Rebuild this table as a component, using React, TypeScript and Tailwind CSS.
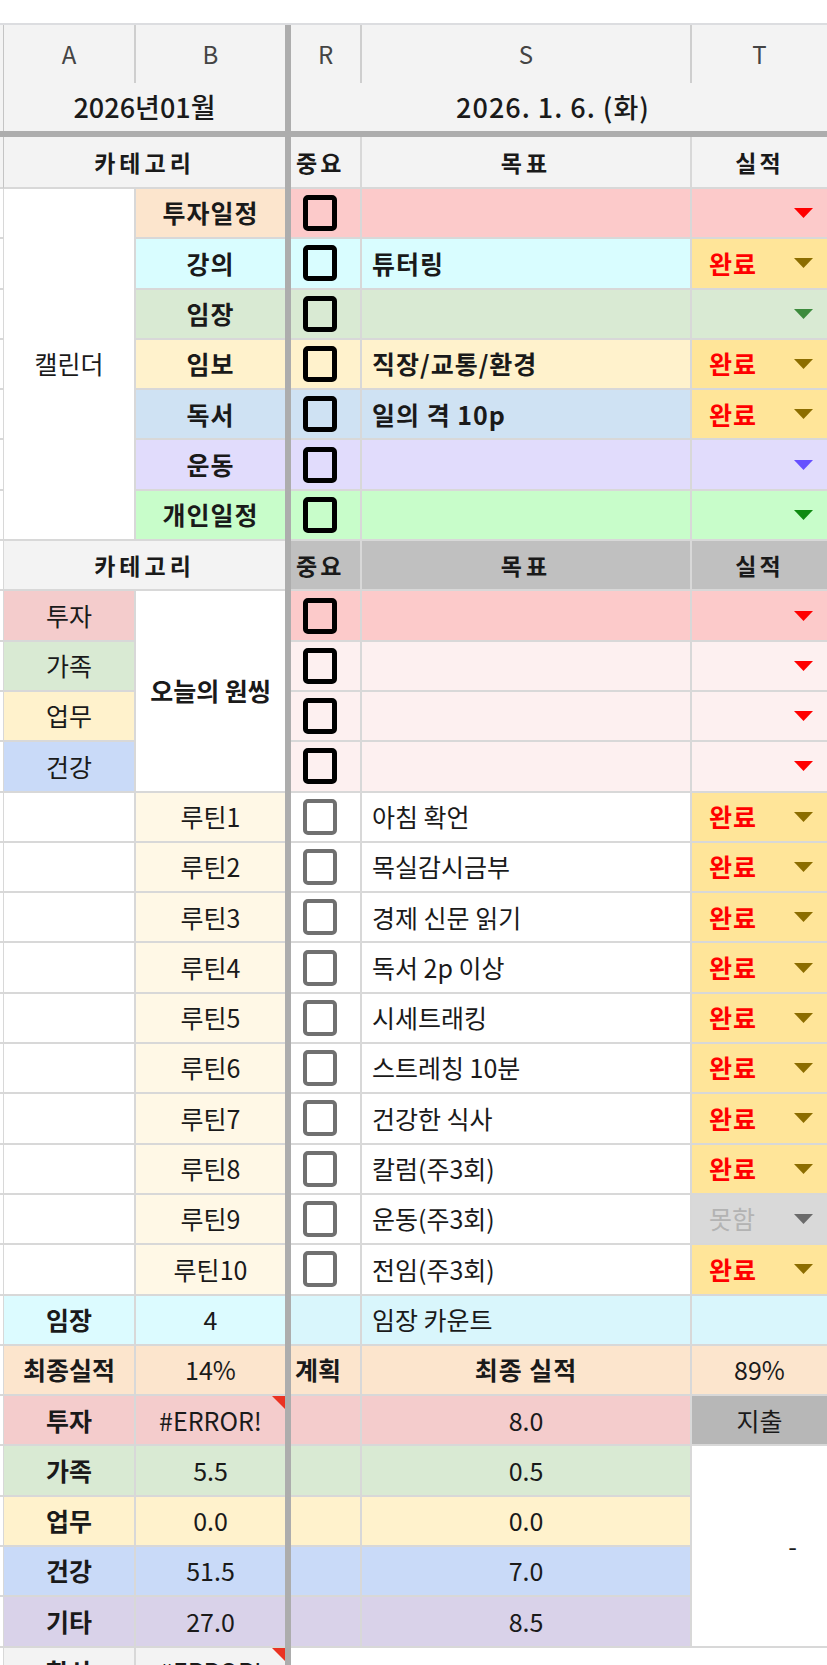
import React from 'react';

const line = 'border-b-2 border-[#d8d8d8]';

function Box({ dark }: { dark?: boolean }) {
  return dark ? (
    <div className="w-[34px] h-[36px] rounded-[5px] border-[5px] border-black" />
  ) : (
    <div className="w-[34px] h-[36px] rounded-[5px] border-[4px] border-[#707070] bg-white" />
  );
}

function Arrow({ color }: { color: string }) {
  return (
    <svg width="19" height="10" viewBox="0 0 19 10">
      <polygon points="0,0 19,0 9.5,10" fill={color} />
    </svg>
  );
}

function ErrorMark() {
  return <div className="absolute top-0 right-0 w-0 h-0 border-l-[13px] border-l-transparent border-t-[13px] border-t-[#ea3323]" />;
}

// T column: status chip with dropdown arrow
function Status({ done, miss, bg, arrow }: { done?: boolean; miss?: boolean; bg?: string; arrow: string }) {
  let cls = `flex items-center justify-between pl-[17px] pr-[14px] ${line}`;
  if (done) cls += ' bg-[#ffe599]';
  else if (miss) cls += ' bg-[#d9d9d9]';
  return (
    <div className={cls} style={bg ? { backgroundColor: bg } : undefined}>
      {done && <span className="text-[25px] font-bold text-[#ff0000] tracking-[1px]">완료</span>}
      {miss && <span className="text-[25px] text-[#b3b3b3]">못함</span>}
      {!done && !miss && <span />}
      <Arrow color={arrow} />
    </div>
  );
}

const calendar = [
  { label: '투자일정', labelBg: 'bg-[#fce5cd]', rowBg: 'bg-[#fccaca]', hex: '#fccaca', goal: '', done: false, arrow: '#ff0000' },
  { label: '강의', labelBg: 'bg-[#d9fdff]', rowBg: 'bg-[#d9fdff]', hex: '#d9fdff', goal: '튜터링', done: true, arrow: '#8c6d00' },
  { label: '임장', labelBg: 'bg-[#d9ead3]', rowBg: 'bg-[#d9ead3]', hex: '#d9ead3', goal: '', done: false, arrow: '#3d8b3d' },
  { label: '임보', labelBg: 'bg-[#fff2cc]', rowBg: 'bg-[#fff2cc]', hex: '#fff2cc', goal: '직장/교통/환경', done: true, arrow: '#8c6d00' },
  { label: '독서', labelBg: 'bg-[#cfe2f3]', rowBg: 'bg-[#cfe2f3]', hex: '#cfe2f3', goal: '일의 격 10p', done: true, arrow: '#8c6d00' },
  { label: '운동', labelBg: 'bg-[#e1dcfc]', rowBg: 'bg-[#e1dcfc]', hex: '#e1dcfc', goal: '', done: false, arrow: '#6650ff' },
  { label: '개인일정', labelBg: 'bg-[#c8fdca]', rowBg: 'bg-[#c8fdca]', hex: '#c8fdca', goal: '', done: false, arrow: '#0f8a12' },
];

const oneThing = [
  { label: '투자', bg: 'bg-[#f4cccc]', rowBg: 'bg-[#fccaca]' },
  { label: '가족', bg: 'bg-[#d9ead3]', rowBg: 'bg-[#fdf0f0]' },
  { label: '업무', bg: 'bg-[#fff2cc]', rowBg: 'bg-[#fdf0f0]' },
  { label: '건강', bg: 'bg-[#c9daf8]', rowBg: 'bg-[#fdf0f0]' },
];

const routines = [
  { goal: '아침 확언', done: true },
  { goal: '목실감시금부', done: true },
  { goal: '경제 신문 읽기', done: true },
  { goal: '독서 2p 이상', done: true },
  { goal: '시세트래킹', done: true },
  { goal: '스트레칭 10분', done: true },
  { goal: '건강한 식사', done: true },
  { goal: '칼럼(주3회)', done: true },
  { goal: '운동(주3회)', done: false },
  { goal: '전임(주3회)', done: true },
];

const totals = [
  { label: '가족', bg: 'bg-[#d9ead3]', a: '5.5', b: '0.5' },
  { label: '업무', bg: 'bg-[#fff2cc]', a: '0.0', b: '0.0' },
  { label: '건강', bg: 'bg-[#c9daf8]', a: '51.5', b: '7.0' },
  { label: '기타', bg: 'bg-[#d9d2e9]', a: '27.0', b: '8.5' },
];

function Strip({ head }: { head?: boolean }) {
  return <div className={`border-r border-[#c4c4c4] ${head ? 'bg-[#f3f3f3]' : `bg-white ${line}`}`} />;
}

export default function App() {
  return (
    <div className="h-[1665px] overflow-hidden bg-white pt-[23px] font-['Noto_Sans_CJK_KR',sans-serif] text-[#1a1a1a]">
      <div className="grid grid-cols-[4px_132px_149px_6px_71px_330px_135px] grid-rows-[58px_48px_6px_52px_repeat(30,50.3px)] border-t-2 border-[#dcdde0]">
        {/* frozen dividers */}
        <div className="col-start-4 row-[1/-1] bg-[#adadad]" />
        <div className="col-[1/-1] row-start-3 bg-[#adadad]" />

        {/* column letters */}
        <Strip head />
        <div className="flex items-center justify-center bg-[#f3f3f3] border-r-2 border-[#cecece] text-[24px] text-[#444]">A</div>
        <div className="flex items-center justify-center bg-[#f3f3f3] text-[24px] text-[#444]">B</div>
        <div className="flex items-center justify-center bg-[#f3f3f3] border-r-2 border-[#cecece] text-[24px] text-[#444]">R</div>
        <div className="flex items-center justify-center bg-[#f3f3f3] border-r-2 border-[#cecece] text-[24px] text-[#444]">S</div>
        <div className="flex items-center justify-center bg-[#f3f3f3] text-[24px] text-[#444]">T</div>

        {/* month / date */}
        <Strip head />
        <div className="col-span-2 flex items-center justify-center bg-[#f3f3f3] text-[27px] font-medium">2026년01월</div>
        <div className="col-span-3 flex items-center justify-center pr-[12px] bg-[#f3f3f3] text-[27px] font-medium tracking-[1px]">2026. 1. 6. (화)</div>

        {/* header */}
        <div className="row-start-4 col-start-1 border-r border-[#c4c4c4] bg-[#f3f3f3] border-b-2 border-b-[#d8d8d8]" />
        <div className={`col-span-2 flex items-center justify-center bg-[#f3f3f3] ${line} text-[23px] font-bold tracking-[4px]`}>카테고리</div>
        <div className={`flex items-center pl-[5px] bg-[#f3f3f3] border-r-2 ${line} text-[23px] font-bold tracking-[3px]`}>중요</div>
        <div className={`flex items-center justify-center bg-[#f3f3f3] border-r-2 ${line} text-[23px] font-bold tracking-[4px]`}>목표</div>
        <div className={`flex items-center justify-center bg-[#f3f3f3] ${line} text-[23px] font-bold tracking-[3px]`}>실적</div>

        {/* calendar block */}
        {calendar.map((r, i) => (
          <React.Fragment key={r.label}>
            <Strip />
            {i === 0 && (
              <div className={`row-span-7 flex items-center justify-center bg-white border-r-2 ${line} text-[25px]`}>캘린더</div>
            )}
            <div className={`flex items-center justify-center ${r.labelBg} ${line} text-[25px] font-bold tracking-[1px]`}>{r.label}</div>
            <div className={`flex items-center pl-[12px] ${r.rowBg} border-r-2 ${line}`}>
              <Box dark />
            </div>
            <div className={`flex items-center pl-[10px] ${r.rowBg} border-r-2 ${line} text-[25px] font-bold tracking-[1px]`}>{r.goal}</div>
            <Status done={r.done} bg={r.done ? undefined : r.hex} arrow={r.arrow} />
          </React.Fragment>
        ))}

        {/* second header */}
        <Strip />
        <div className={`col-span-2 flex items-center justify-center bg-[#f3f3f3] ${line} text-[23px] font-bold tracking-[4px]`}>카테고리</div>
        <div className={`flex items-center pl-[5px] bg-[#c0c0c0] border-r-2 ${line} text-[23px] font-bold tracking-[3px]`}>중요</div>
        <div className={`flex items-center justify-center bg-[#c0c0c0] border-r-2 ${line} text-[23px] font-bold tracking-[4px]`}>목표</div>
        <div className={`flex items-center justify-center bg-[#c0c0c0] ${line} text-[23px] font-bold tracking-[3px]`}>실적</div>

        {/* one thing */}
        {oneThing.map((r, i) => (
          <React.Fragment key={r.label}>
            <Strip />
            <div className={`flex items-center justify-center ${r.bg} border-r-2 ${line} text-[25px]`}>{r.label}</div>
            {i === 0 && (
              <div className={`row-span-4 flex items-center justify-center bg-white ${line} text-[25px] font-bold`}>오늘의 원씽</div>
            )}
            <div className={`flex items-center pl-[12px] ${r.rowBg} border-r-2 ${line}`}>
              <Box dark />
            </div>
            <div className={`${r.rowBg} border-r-2 ${line}`} />
            <div className={`flex items-center justify-end pr-[14px] ${r.rowBg} ${line}`}>
              <Arrow color="#ff0000" />
            </div>
          </React.Fragment>
        ))}

        {/* routines */}
        {routines.map((r, i) => (
          <React.Fragment key={r.goal}>
            <Strip />
            <div className={`bg-white border-r-2 ${line}`} />
            <div className={`flex items-center justify-center bg-[#fff8e6] ${line} text-[25px]`}>루틴{i + 1}</div>
            <div className={`flex items-center pl-[12px] bg-white border-r-2 ${line}`}>
              <Box />
            </div>
            <div className={`flex items-center pl-[10px] bg-white border-r-2 ${line} text-[25px]`}>{r.goal}</div>
            {r.done ? <Status done arrow="#8c6d00" /> : <Status miss arrow="#6b6b6b" />}
          </React.Fragment>
        ))}

        {/* 임장 count */}
        <Strip />
        <div className={`flex items-center justify-center bg-[#dcfbff] border-r-2 ${line} text-[25px] font-bold`}>임장</div>
        <div className={`flex items-center justify-center bg-[#dcfbff] ${line} text-[25px]`}>4</div>
        <div className={`bg-[#d9f6fc] border-r-2 ${line}`} />
        <div className={`flex items-center pl-[10px] bg-[#d9f6fc] border-r-2 ${line} text-[25px]`}>임장 카운트</div>
        <div className={`bg-[#d9f6fc] ${line}`} />

        {/* final result */}
        <Strip />
        <div className={`flex items-center justify-center bg-[#fce5cd] border-r-2 ${line} text-[25px] font-bold`}>최종실적</div>
        <div className={`flex items-center justify-center bg-[#fce5cd] ${line} text-[25px]`}>14%</div>
        <div className={`flex items-center pl-[4px] bg-[#fce5cd] border-r-2 ${line} text-[25px] font-bold`}>계획</div>
        <div className={`flex items-center justify-center bg-[#fce5cd] border-r-2 ${line} text-[25px] font-bold tracking-[1px]`}>최종 실적</div>
        <div className={`flex items-center justify-center bg-[#fce5cd] ${line} text-[25px]`}>89%</div>

        {/* 투자 totals */}
        <Strip />
        <div className={`flex items-center justify-center bg-[#f4cccc] border-r-2 ${line} text-[25px] font-bold`}>투자</div>
        <div className={`relative flex items-center justify-center bg-[#f4cccc] ${line} text-[25px]`}>
          #ERROR!
          <ErrorMark />
        </div>
        <div className={`bg-[#f4cccc] border-r-2 ${line}`} />
        <div className={`flex items-center justify-center bg-[#f4cccc] border-r-2 ${line} text-[25px]`}>8.0</div>
        <div className={`flex items-center justify-center bg-[#b7b7b7] ${line} text-[25px]`}>지출</div>

        {totals.map((r, i) => (
          <React.Fragment key={r.label}>
            <Strip />
            <div className={`flex items-center justify-center ${r.bg} border-r-2 ${line} text-[25px] font-bold`}>{r.label}</div>
            <div className={`flex items-center justify-center ${r.bg} ${line} text-[25px]`}>{r.a}</div>
            <div className={`${r.bg} border-r-2 ${line}`} />
            <div className={`flex items-center justify-center ${r.bg} border-r-2 ${line} text-[25px]`}>{r.b}</div>
            {i === 0 && (
              <div className={`row-span-4 flex items-center justify-end pr-[30px] bg-white ${line} text-[25px]`}>-</div>
            )}
          </React.Fragment>
        ))}

        {/* sum row (cut off) */}
        <Strip />
        <div className={`flex items-center justify-center bg-[#f3f3f3] border-r-2 ${line} text-[25px] font-bold`}>합산</div>
        <div className={`relative flex items-center justify-center bg-[#f3f3f3] ${line} text-[25px]`}>
          #ERROR!
          <ErrorMark />
        </div>
        <div className="bg-white" />
        <div className="bg-white" />
        <div className="bg-white" />
      </div>
    </div>
  );
}
